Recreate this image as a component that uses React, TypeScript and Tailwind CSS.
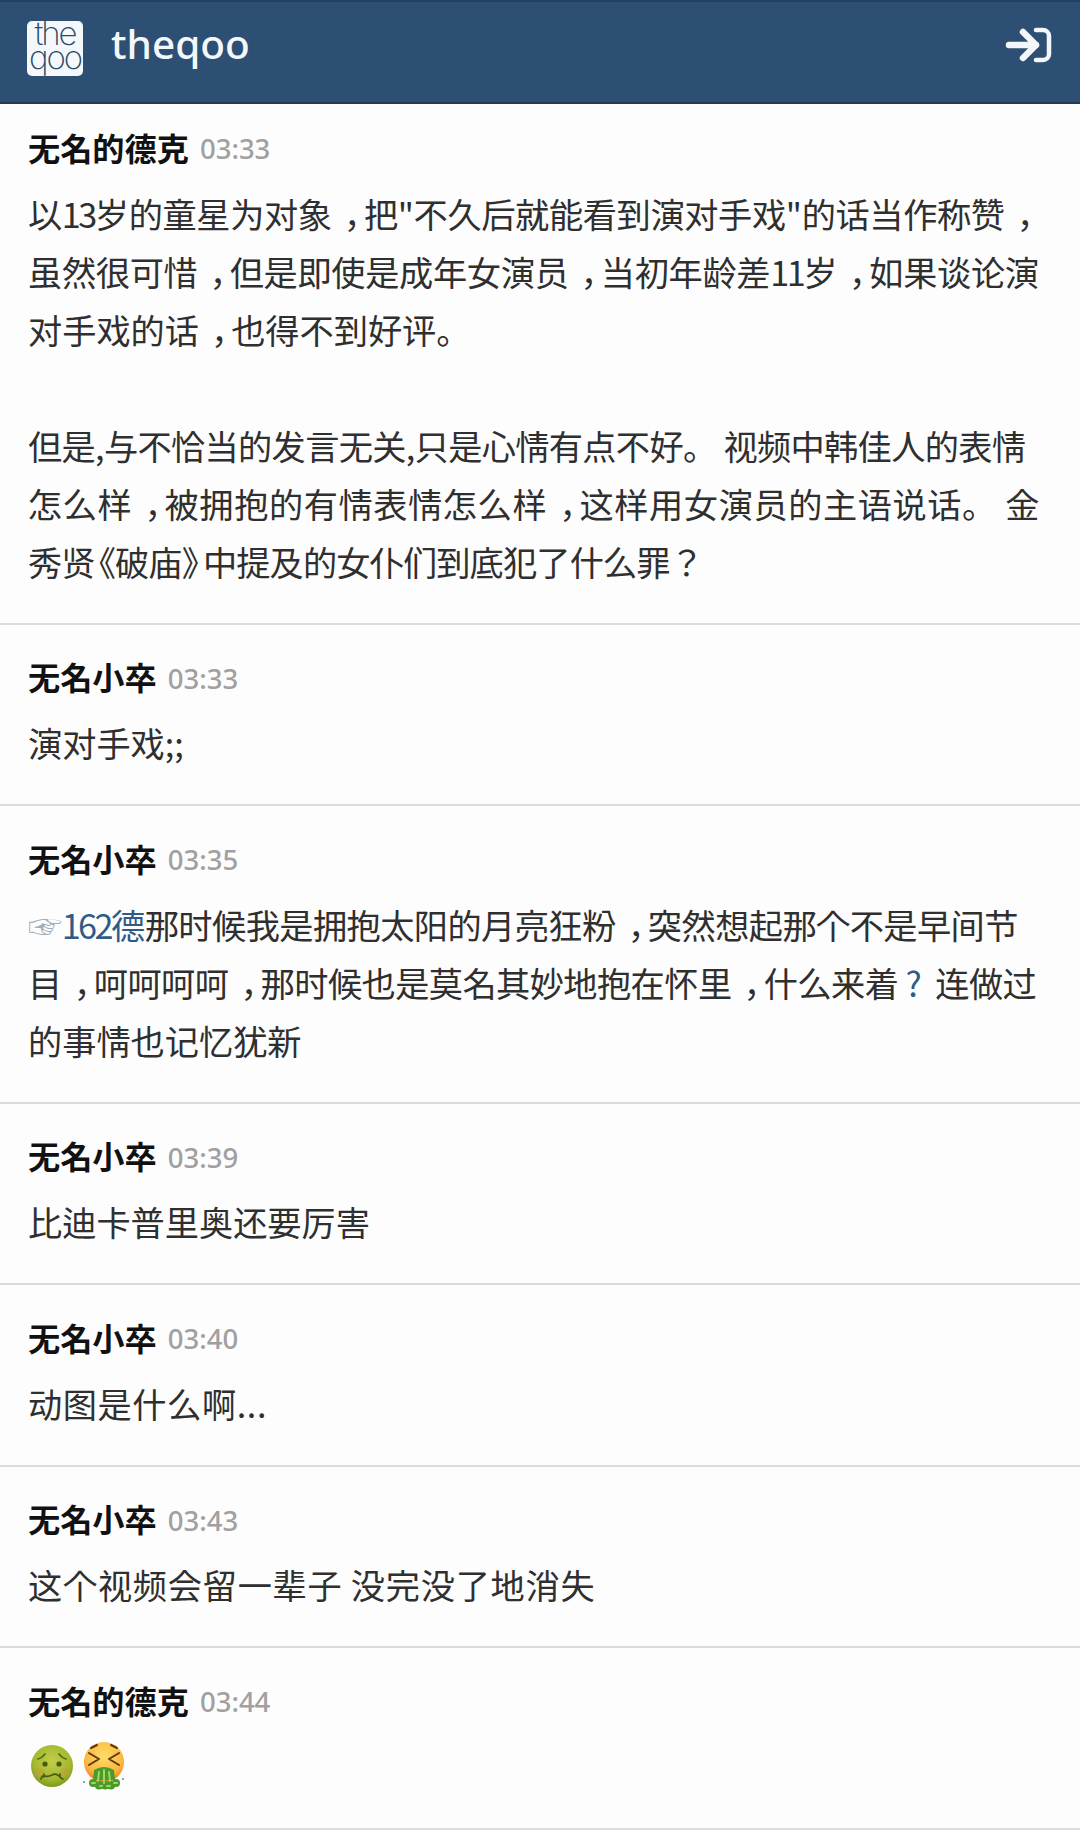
import { type ReactNode } from "react";

type Comment = {
  id: number;
  author: string;
  time: string;
  body: ReactNode;
};

function LoginIcon() {
  return (
    <svg width="48" height="38" viewBox="0 0 48 38" fill="none" stroke="#f4f7fa" strokeLinecap="round" strokeLinejoin="round">
      <path d="M4 19h27M18 6l13 13-13 13" strokeWidth="6.5" />
      <path d="M31 4h7a6 6 0 0 1 6 6v18a6 6 0 0 1-6 6h-7" strokeWidth="4.5" />
    </svg>
  );
}

function Logo() {
  return (
    <div className="flex h-[55px] w-[56px] items-start justify-center rounded-[5px] bg-[#f5f8fa] text-center font-['Inter',sans-serif] text-[33px] font-extralight leading-[24px] tracking-[-2px] text-[#2a4a6b]">
      <span>
        the
        <br />
        qoo
      </span>
    </div>
  );
}

function SickFace() {
  return (
    <svg width="44" height="44" viewBox="0 0 44 44">
      <defs>
        <radialGradient id="sick" cx="50%" cy="38%" r="62%">
          <stop offset="0%" stopColor="#c3cc4a" />
          <stop offset="70%" stopColor="#a3b92f" />
          <stop offset="100%" stopColor="#7c9a1a" />
        </radialGradient>
      </defs>
      <circle cx="22" cy="22" r="21" fill="url(#sick)" />
      <circle cx="9" cy="29" r="5" fill="#c9963c" opacity="0.45" />
      <circle cx="35" cy="29" r="5" fill="#c9963c" opacity="0.45" />
      <path d="M8 15q4-1 7-5M36 15q-4-1-7-5" stroke="#536b12" strokeWidth="1.8" fill="none" strokeLinecap="round" />
      <circle cx="15" cy="20" r="2.6" fill="#465c10" />
      <circle cx="29" cy="20" r="2.6" fill="#465c10" />
      <path d="M11 35q1-4 4-3t7-1 7 1 4 3M14 33v-3M30 33v-3" stroke="#465c10" strokeWidth="1.7" fill="none" strokeLinecap="round" />
    </svg>
  );
}

function VomitFace() {
  return (
    <svg width="44" height="48" viewBox="0 0 44 48">
      <defs>
        <radialGradient id="vomit" cx="50%" cy="35%" r="62%">
          <stop offset="0%" stopColor="#ffdc66" />
          <stop offset="75%" stopColor="#fbb840" />
          <stop offset="100%" stopColor="#ef8d26" />
        </radialGradient>
      </defs>
      <circle cx="23" cy="20" r="20" fill="url(#vomit)" />
      <path d="M8 11l10 6-10 6M38 11l-10 6 10 6M10 6l6-3M36 6l-6-3" stroke="#5b3a12" strokeWidth="2" fill="none" strokeLinecap="round" strokeLinejoin="round" />
      <path d="M13 28q10-6 20 0l1 10H12z" fill="#4c9a2a" />
      <g fill="#4c9a2a">
        <circle cx="12" cy="41" r="4" />
        <circle cx="18" cy="43" r="4.5" />
        <circle cx="24" cy="43" r="4.5" />
        <circle cx="30" cy="43" r="4.5" />
        <circle cx="35" cy="41" r="4" />
      </g>
      <path d="M18 30l-1 9M23 28v13M28 30l1 9M11 41h3M19 44h2M26 44h3M33 41h3" stroke="#96da5e" strokeWidth="2" fill="none" strokeLinecap="round" />
      <circle cx="3" cy="40" r="1" fill="#6b8a8a" />
      <circle cx="42" cy="37" r="1" fill="#6b8a8a" />
    </svg>
  );
}

// digits run narrower than the body face does by default
function Num({ children }: { children: ReactNode }) {
  return <span className="tracking-[-2.5px]">{children}</span>;
}

function Comma() {
  return <span className="pl-[12px] tracking-[-14px]">，</span>;
}

// one rendered line; each carries its own tracking since the comment text is unevenly set
function Line({ className, children }: { className?: string; children: ReactNode }) {
  return <span className={`block ${className ?? ""}`}>{children}</span>;
}

const comments: Comment[] = [
  {
    id: 1,
    author: "无名的德克",
    time: "03:33",
    body: (
      <>
        <Line className="tracking-[-0.35px]">
          以<Num>13</Num>岁的童星为对象<Comma />把"不久后就能看到演对手戏"的话当作称赞<Comma />
        </Line>
        <Line className="tracking-[-0.3px]">
          虽然很可惜<Comma />但是即使是成年女演员<Comma />当初年龄差<Num>11</Num>岁<Comma />如果谈论演
        </Line>
        <Line>
          对手戏的话<Comma />也得不到好评。
        </Line>
        <Line>&nbsp;</Line>
        <Line className="tracking-[-0.65px]">但是,与不恰当的发言无关,只是心情有点不好。 视频中韩佳人的表情</Line>
        <Line className="tracking-[0.6px]">
          怎么样<Comma />被拥抱的有情表情怎么样<Comma />这样用女演员的主语说话。 金
        </Line>
        <Line className="tracking-[-0.85px]">
          秀贤<span className="ml-[-13px]">《</span>破庙<span className="tracking-[-13px]">》</span>中提及的女仆们到底犯了什么罪？
        </Line>
      </>
    ),
  },
  { id: 2, author: "无名小卒", time: "03:33", body: "演对手戏;;" },
  {
    id: 3,
    author: "无名小卒",
    time: "03:35",
    body: (
      <>
        <Line className="tracking-[-0.55px]">
          <span className="text-[#a3adb5]">☞</span>
          <span className="text-[#2f5b8a]">
            <Num>162</Num>德
          </span>
          那时候我是拥抱太阳的月亮狂粉<Comma />突然想起那个不是早间节
        </Line>
        <Line className="tracking-[-0.55px]">
          目<Comma />呵呵呵呵<Comma />那时候也是莫名其妙地抱在怀里<Comma />什么来着
          <span className="text-[#2f5b8a]"> ? </span>
          &nbsp;连做过
        </Line>
        <Line>的事情也记忆犹新</Line>
      </>
    ),
  },
  { id: 4, author: "无名小卒", time: "03:39", body: "比迪卡普里奥还要厉害" },
  { id: 5, author: "无名小卒", time: "03:40", body: <Line className="tracking-[0.6px]">动图是什么啊...</Line> },
  { id: 6, author: "无名小卒", time: "03:43", body: <Line className="tracking-[0.75px]">这个视频会留一辈子 没完没了地消失</Line> },
  {
    id: 7,
    author: "无名的德克",
    time: "03:44",
    body: (
      <span className="flex h-[58px] items-center gap-[7px] pl-[2px]">
        <SickFace />
        <VomitFace />
      </span>
    ),
  },
];

export default function App() {
  return (
    <div className="flex h-[1831px] w-[1080px] flex-col overflow-hidden bg-[#fdfdfd] font-['Noto_Sans_CJK_KR','Noto_Sans',sans-serif]">
      <header className="flex h-[104px] shrink-0 items-center justify-between border-t-[2px] border-b-2 border-t-[#24405e] border-b-[#25384f] bg-[#2c4f73] pb-[7px] pl-[27px] pr-[27px]">
        <div className="flex items-center gap-[28px]">
          <Logo />
          <span className="mb-[9px] font-['Noto_Sans',sans-serif] text-[40.5px] font-medium leading-none text-[#f4f7fa]">theqoo</span>
        </div>
        <div className="mb-[8px]">
          <LoginIcon />
        </div>
      </header>
      <main className="flex flex-col">
        {comments.map((comment) => (
          <article
            key={comment.id}
            className={`border-b-2 border-b-[#dcdcdc] pb-[33px] pl-[28px] ${comment.id === 1 ? "pt-[20px]" : "pt-[29px]"}`}
          >
            <div className="flex h-[46px] items-center gap-[11px]">
              <span className="text-[32.2px] font-bold text-[#111111]">{comment.author}</span>
              <span className="mt-[4px] font-['Noto_Sans',sans-serif] text-[27.5px] font-medium text-[#a0a0a0]">{comment.time}</span>
            </div>
            <div className="mt-[13.5px] whitespace-nowrap text-[34.2px] leading-[58px] text-[#2f2f2f]">{comment.body}</div>
          </article>
        ))}
      </main>
    </div>
  );
}
